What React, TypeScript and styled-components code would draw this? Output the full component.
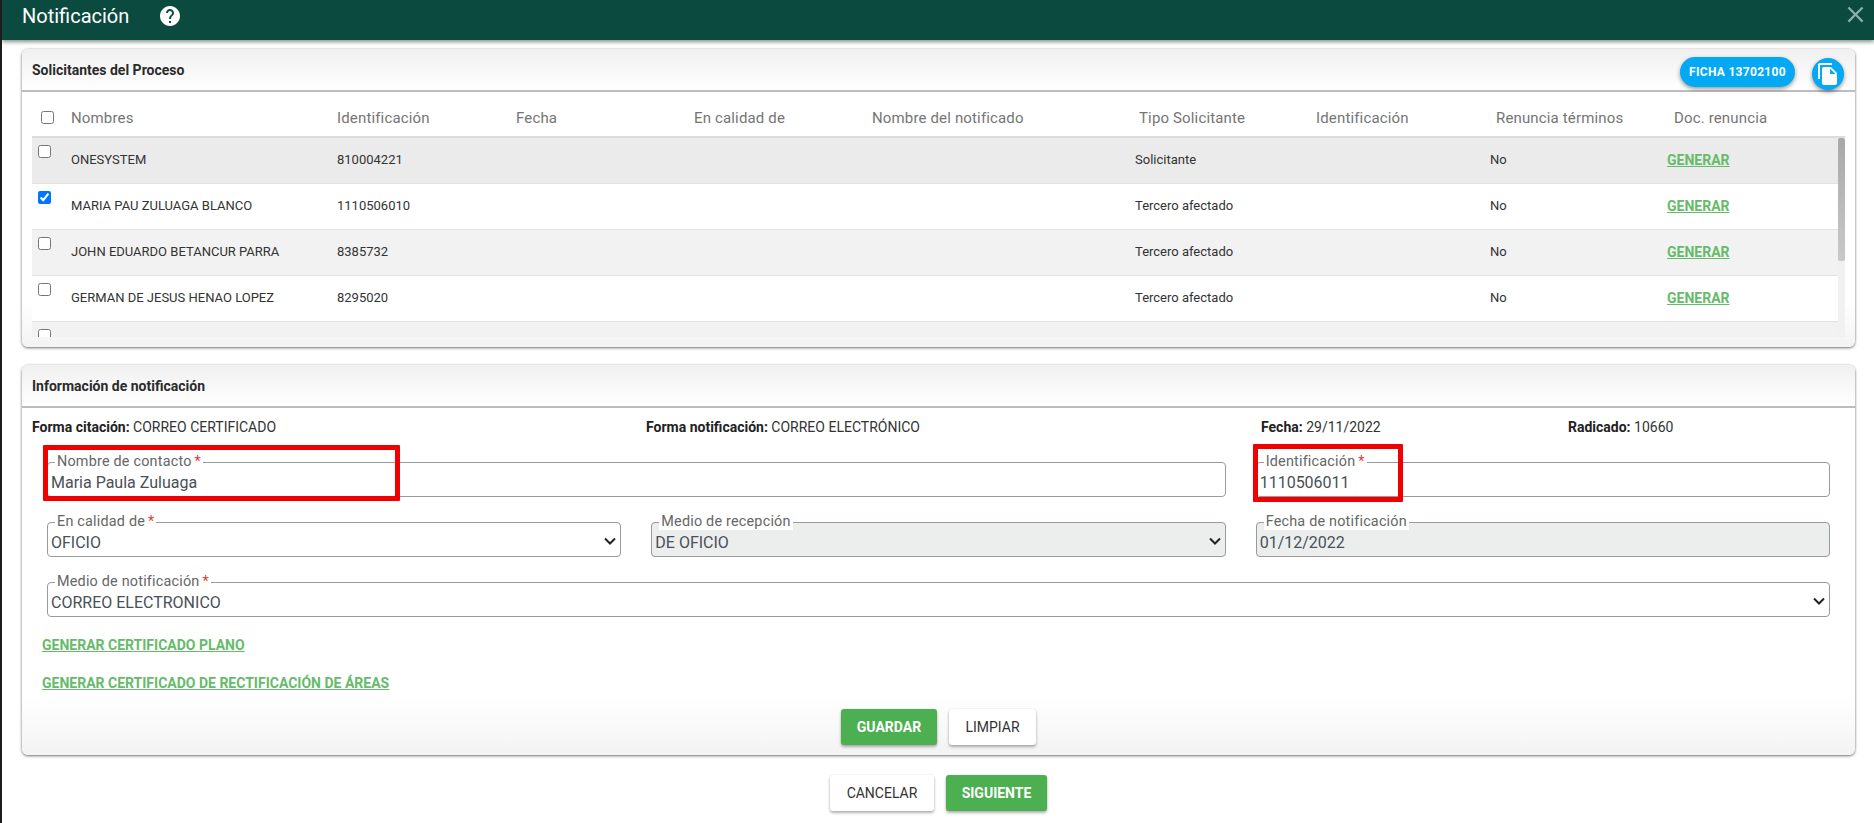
import React from "react";
import styled, { createGlobalStyle } from "styled-components";

const Global = createGlobalStyle`
  html, body { margin: 0; padding: 0; background: #fff; overflow: hidden; }
  body { font-family: Roboto, "Liberation Sans", sans-serif; }
  * { box-sizing: border-box; }
`;

const Page = styled.div`
  width: 1874px;
  height: 823px;
  border-left: 2px solid #1c1c1c;
  display: flex;
  flex-direction: column;
  overflow: hidden;
  background: #fff;
`;

const TopBar = styled.header`
  height: 40px;
  flex: none;
  background: #0b4a3f;
  box-shadow: 0 2px 4px rgba(0, 0, 0, 0.45);
  display: flex;
  align-items: center;
  padding: 0 5px 8px 20px;
  color: #fff;
  position: relative;
  z-index: 2;
`;

const Title = styled.h1`
  margin: 0;
  font-size: 20px;
  font-weight: 400;
  line-height: 32px;
`;

const HelpIcon = styled.svg`
  width: 24px;
  height: 24px;
  margin-left: 29px;
  fill: #fff;
`;

const CloseIcon = styled.svg`
  width: 27px;
  height: 27px;
  margin-left: auto;
  margin-bottom: 3px;
  fill: #8fb0a9;
`;

const Main = styled.main`
  flex: 1;
  padding: 9px 19px 0 20px;
  display: flex;
  flex-direction: column;
`;

const Card = styled.section<{ $height: number; $gap?: number }>`
  height: ${(p) => p.$height}px;
  margin-bottom: ${(p) => p.$gap ?? 0}px;
  flex: none;
  border-radius: 6px;
  background: linear-gradient(to bottom, #fff 85%, #f3f3f3 100%);
  box-shadow: 0 1px 3px rgba(0, 0, 0, 0.55), 0 0 2px rgba(0, 0, 0, 0.12);
  display: flex;
  flex-direction: column;
  overflow: hidden;
`;

const CardHead = styled.div`
  height: 43px;
  flex: none;
  padding: 0 10px;
  display: flex;
  align-items: center;
  background: linear-gradient(to bottom, #f0f0f0, #fff);
  border-bottom: 2px solid #bdbdbd;
`;

const CardTitle = styled.h2`
  margin: 0;
  font-size: 14px;
  font-weight: 700;
  color: #2b2b2b;
`;

const Pill = styled.span`
  margin-left: auto;
  height: 30px;
  width: 115px;
  border-radius: 15px;
  background: #03a9f4;
  color: #fff;
  font-size: 12px;
  font-weight: 700;
  display: flex;
  align-items: center;
  justify-content: center;
  letter-spacing: 0.3px;
  box-shadow: 0 2px 4px rgba(0, 0, 0, 0.4);
  position: relative;
  top: 2px;
`;

const Fab = styled.span`
  width: 32px;
  height: 32px;
  margin-left: 17px;
  margin-right: 1px;
  border-radius: 50%;
  background: #03a9f4;
  display: flex;
  align-items: center;
  justify-content: center;
  box-shadow: 0 2px 4px rgba(0, 0, 0, 0.4);
  position: relative;
  top: 4px;
`;

const FabIcon = styled.svg`
  width: 24px;
  height: 24px;
  fill: #fff;
`;

const TableWrap = styled.div`
  margin: 8px 10px 0;
  height: 237px;
  overflow: hidden;
  display: flex;
  flex-direction: column;
`;

const cols = "39px 266px 179px 178px 178px 263px 181px 174px 177px 1fr";

const HeadRow = styled.div`
  display: grid;
  grid-template-columns: ${cols};
  height: 38px;
  flex: none;
  align-items: center;
  border-bottom: 2px solid #dcdcdc;
`;

const HeadCell = styled.span<{ $indent?: number }>`
  font-size: 15px;
  color: #757575;
  letter-spacing: 0.15px;
  white-space: nowrap;
  padding-left: ${(p) => p.$indent ?? 0}px;
`;

const HeadCheck = styled.input`
  margin: -2px 0 0 9px;
  width: 13px;
  height: 13px;
`;

const RowsArea = styled.div`
  position: relative;
  flex: 1;
  overflow: hidden;
  padding-right: 7px;
`;

const Row = styled.div<{ $bg: string }>`
  display: grid;
  grid-template-columns: ${cols};
  height: 46px;
  align-items: center;
  background: ${(p) => p.$bg};
  border-bottom: 1px solid #e2e2e2;
  position: relative;
`;

const Cell = styled.span`
  font-size: 13px;
  color: #333;
  white-space: nowrap;
  padding-bottom: 2px;
`;

const RowCheck = styled.input`
  margin: -19px 0 0 6px;
  width: 13px;
  height: 13px;
`;

const GreenLink = styled.a`
  font-size: 14px;
  font-weight: 700;
  color: #66bb6a;
  text-decoration: underline;
  white-space: nowrap;
`;

const Track = styled.div`
  position: absolute;
  right: 0;
  top: 0;
  bottom: 0;
  width: 7px;
  background: #f1f1f1;
`;

const Thumb = styled.div`
  width: 7px;
  height: 123px;
  background: linear-gradient(to bottom, #a8a8a8, #c9c9c9);
  border-radius: 2px;
`;

const InfoRow = styled.div`
  display: grid;
  grid-template-columns: 614px 615px 307px 1fr;
  height: 37px;
  flex: none;
  align-items: center;
  padding: 0 10px;
  font-size: 14px;
  color: #333;
`;

const InfoLabel = styled.b`
  font-weight: 700;
  color: #222;
`;

const Fields = styled.div`
  display: grid;
  grid-template-columns: repeat(3, 1fr);
  column-gap: 30px;
  row-gap: 17px;
  padding: 9px 25px 0;
`;

const Field = styled.fieldset<{ $span?: number; $disabled?: boolean }>`
  grid-column: span ${(p) => p.$span ?? 1};
  margin: 0;
  padding: 0 3px;
  height: 43px;
  min-width: 0;
  border: 1px solid #9a9a9a;
  border-radius: 4px;
  position: relative;
  background: ${(p) => (p.$disabled ? "#eceeed" : "transparent")};
`;

const Legend = styled.legend`
  margin-left: 4px;
  padding: 0 2px;
  font-size: 14.4px;
  line-height: 16px;
  color: #666;
  letter-spacing: 0.2px;
  background: #fff;
  white-space: nowrap;
`;

const Star = styled.span`
  color: #e53935;
  margin-left: 3px;
`;

const Input = styled.input`
  display: block;
  width: 100%;
  height: 24px;
  padding: 0;
  border: 0;
  outline: 0;
  background: transparent;
  font: 400 16px Roboto, "Liberation Sans", sans-serif;
  color: #495057;
`;

const Select = styled.select`
  display: block;
  width: 100%;
  height: 24px;
  padding: 0;
  border: 0;
  outline: 0;
  background: transparent;
  appearance: none;
  font: 400 16px Roboto, "Liberation Sans", sans-serif;
  color: #495057;
`;

const Chevron = styled.svg`
  position: absolute;
  right: 4px;
  top: 7px;
  width: 12px;
  height: 8px;
  fill: none;
  stroke: #222;
  stroke-width: 2;
  pointer-events: none;
`;

const Highlight = styled.div<{ $w: number; $left: number; $top: number; $h: number }>`
  position: absolute;
  left: ${(p) => p.$left}px;
  top: ${(p) => p.$top}px;
  width: ${(p) => p.$w}px;
  height: ${(p) => p.$h}px;
  border: 5px solid #f00000;
  border-radius: 1px;
  pointer-events: none;
  z-index: 1;
`;

const Links = styled.div`
  padding: 21px 20px 0;
  display: flex;
  flex-direction: column;
  align-items: flex-start;
  gap: 24px;
  line-height: 14px;
`;

const Actions = styled.div<{ $top: number }>`
  display: flex;
  justify-content: center;
  gap: 12px;
  margin-top: ${(p) => p.$top}px;
`;

const Button = styled.button<{ $primary?: boolean; $w: number }>`
  width: ${(p) => p.$w}px;
  height: 36px;
  border: 0;
  padding: 0;
  border-radius: 3px;
  font: ${(p) => (p.$primary ? 700 : 400)} 14px Roboto, "Liberation Sans", sans-serif;
  color: ${(p) => (p.$primary ? "#fff" : "#333")};
  background: ${(p) => (p.$primary ? "#4caf50" : "#fff")};
  box-shadow: 0 2px 3px rgba(0, 0, 0, 0.3), 0 0 2px rgba(0, 0, 0, 0.1);
`;

const rows = [
  { name: "ONESYSTEM", id: "810004221", tipo: "Solicitante", bg: "#ebebeb" },
  { name: "MARIA PAU ZULUAGA BLANCO", id: "1110506010", tipo: "Tercero afectado", bg: "#fff", checked: true },
  { name: "JOHN EDUARDO BETANCUR PARRA", id: "8385732", tipo: "Tercero afectado", bg: "#f2f2f2" },
  { name: "GERMAN DE JESUS HENAO LOPEZ", id: "8295020", tipo: "Tercero afectado", bg: "#fff" },
  { name: "", id: "", tipo: "", bg: "#f2f2f2" },
];

const Down = () => (
  <Chevron viewBox="0 0 12 8">
    <path d="M1 1.5l5 5 5-5" />
  </Chevron>
);

export default function App() {
  return (
    <Page>
      <Global />
      <TopBar>
        <Title>Notificación</Title>
        <HelpIcon viewBox="0 0 24 24">
          <path d="M12 2C6.48 2 2 6.48 2 12s4.48 10 10 10 10-4.48 10-10S17.52 2 12 2zm1 17h-2v-2h2v2zm2.07-7.75l-.9.92C13.45 12.9 13 13.5 13 15h-2v-.5c0-1.1.45-2.1 1.17-2.83l1.24-1.26c.37-.36.59-.86.59-1.41 0-1.1-.9-2-2-2s-2 .9-2 2H8c0-2.21 1.79-4 4-4s4 1.79 4 4c0 .88-.36 1.68-.93 2.25z" />
        </HelpIcon>
        <CloseIcon viewBox="0 0 24 24">
          <path d="M19 6.41L17.59 5 12 10.59 6.41 5 5 6.41 10.59 12 5 17.59 6.41 19 12 13.41 17.59 19 19 17.59 13.41 12z" />
        </CloseIcon>
      </TopBar>
      <Main>
        <Card $height={298} $gap={18}>
          <CardHead>
            <CardTitle>Solicitantes del Proceso</CardTitle>
            <Pill>FICHA 13702100</Pill>
            <Fab>
              <FabIcon viewBox="0 0 24 24">
                <path d="M16 1H4c-1.1 0-2 .9-2 2v14h2V3h12V1zm-1 4l6 6v10c0 1.1-.9 2-2 2H7.99C6.89 23 6 22.1 6 21l.01-14c0-1.1.89-2 1.99-2h7zm-1 7h5.5L14 6.5V12z" />
              </FabIcon>
            </Fab>
          </CardHead>
          <TableWrap>
            <HeadRow>
              <HeadCheck type="checkbox" />
              <HeadCell>Nombres</HeadCell>
              <HeadCell>Identificación</HeadCell>
              <HeadCell>Fecha</HeadCell>
              <HeadCell>En calidad de</HeadCell>
              <HeadCell>Nombre del notificado</HeadCell>
              <HeadCell $indent={4}>Tipo Solicitante</HeadCell>
              <HeadCell>Identificación</HeadCell>
              <HeadCell $indent={6}>Renuncia términos</HeadCell>
              <HeadCell $indent={7}>Doc. renuncia</HeadCell>
            </HeadRow>
            <RowsArea>
              {rows.map((r, i) => (
                <Row key={i} $bg={r.bg}>
                  <RowCheck type="checkbox" defaultChecked={r.checked} />
                  <Cell>{r.name}</Cell>
                  <Cell>{r.id}</Cell>
                  <Cell />
                  <Cell />
                  <Cell />
                  <Cell>{r.tipo}</Cell>
                  <Cell />
                  <Cell>{r.name ? "No" : ""}</Cell>
                  <Cell>{r.name ? <GreenLink href="#">GENERAR</GreenLink> : null}</Cell>
                </Row>
              ))}
              <Track>
                <Thumb />
              </Track>
            </RowsArea>
          </TableWrap>
        </Card>
        <Card $height={390} $gap={20}>
          <CardHead>
            <CardTitle>Información de notificación</CardTitle>
          </CardHead>
          <InfoRow>
            <span>
              <InfoLabel>Forma citación:</InfoLabel> CORREO CERTIFICADO
            </span>
            <span>
              <InfoLabel>Forma notificación:</InfoLabel> CORREO ELECTRÓNICO
            </span>
            <span>
              <InfoLabel>Fecha:</InfoLabel> 29/11/2022
            </span>
            <span>
              <InfoLabel>Radicado:</InfoLabel> 10660
            </span>
          </InfoRow>
          <Fields>
            <Field $span={2}>
              <Legend>
                Nombre de contacto<Star>*</Star>
              </Legend>
              <Input readOnly value="Maria Paula Zuluaga" />
              <Highlight $left={-5} $w={357} $top={-25} $h={56} />
            </Field>
            <Field>
              <Legend>
                Identificación<Star>*</Star>
              </Legend>
              <Input readOnly value="1110506011" />
              <Highlight $left={-4} $w={150} $top={-26} $h={58} />
            </Field>
            <Field>
              <Legend>
                En calidad de<Star>*</Star>
              </Legend>
              <Select defaultValue="OFICIO">
                <option>OFICIO</option>
              </Select>
              <Down />
            </Field>
            <Field $disabled>
              <Legend>Medio de recepción</Legend>
              <Select defaultValue="DE OFICIO">
                <option>DE OFICIO</option>
              </Select>
              <Down />
            </Field>
            <Field $disabled>
              <Legend>Fecha de notificación</Legend>
              <Input readOnly value="01/12/2022" />
            </Field>
            <Field $span={3}>
              <Legend>
                Medio de notificación<Star>*</Star>
              </Legend>
              <Select defaultValue="CORREO ELECTRONICO">
                <option>CORREO ELECTRONICO</option>
              </Select>
              <Down />
            </Field>
          </Fields>
          <Links>
            <GreenLink href="#">GENERAR CERTIFICADO PLANO</GreenLink>
            <GreenLink href="#">GENERAR CERTIFICADO DE RECTIFICACIÓN DE ÁREAS</GreenLink>
          </Links>
          <Actions $top={19}>
            <Button $primary $w={96}>GUARDAR</Button>
            <Button $w={87}>LIMPIAR</Button>
          </Actions>
        </Card>
        <Actions $top={0}>
          <Button $w={104}>CANCELAR</Button>
          <Button $primary $w={101}>SIGUIENTE</Button>
        </Actions>
      </Main>
    </Page>
  );
}
